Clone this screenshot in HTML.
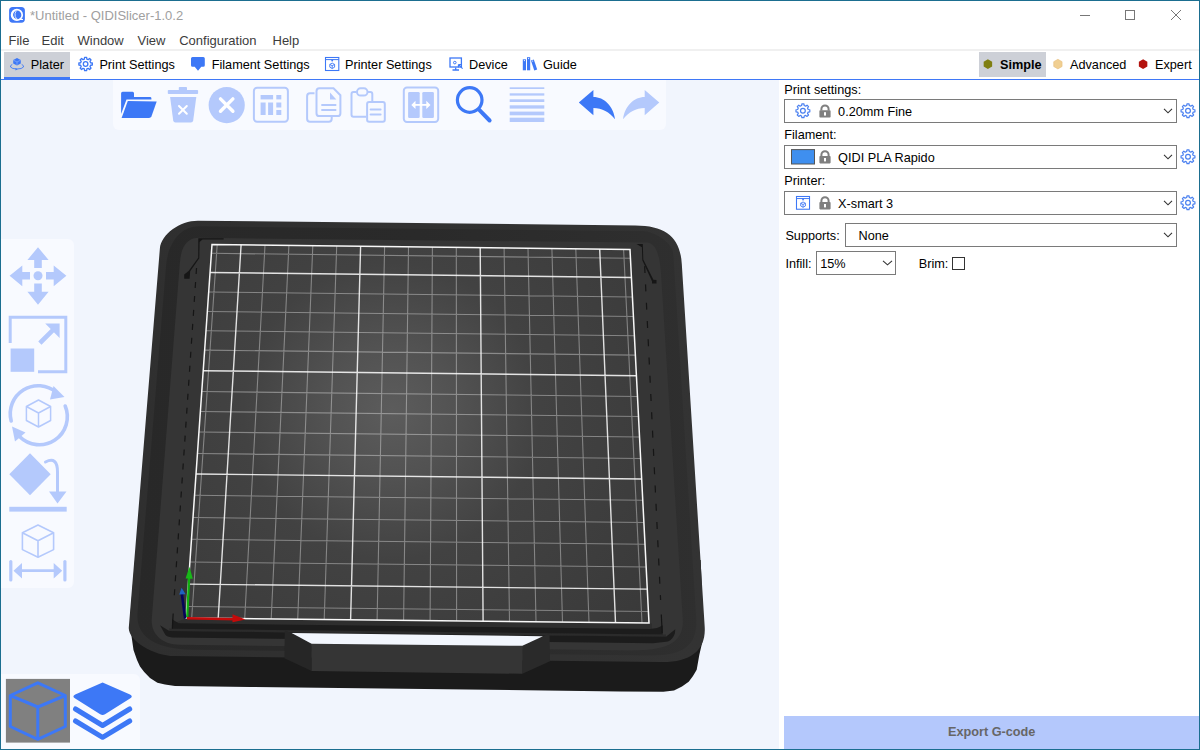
<!DOCTYPE html>
<html><head><meta charset="utf-8">
<style>
*{margin:0;padding:0;box-sizing:border-box}
html,body{width:1200px;height:750px;overflow:hidden;background:#fff;font-family:"Liberation Sans",sans-serif}
.a{position:absolute}
.t{position:absolute;white-space:nowrap;font-size:12.7px;color:#000;line-height:16px;padding-top:1px}
.menu{color:#3c3c3c;font-size:13px}
.box{position:absolute;border:1px solid #7a7a7a;background:#fff}
</style></head><body>
<!-- canvas -->
<div class="a" style="left:1px;top:80px;width:778px;height:669px;background:#f1f5fd"></div>
<div class="a" style="left:113px;top:80px;width:553px;height:49.5px;background:#f8faff;border-radius:0 0 6px 6px"></div>
<div class="a" style="left:1px;top:239px;width:73px;height:349px;background:#f8faff;border-radius:0 6px 6px 0"></div>
<div class="a" style="left:1px;top:674px;width:139px;height:75px;background:#f8faff;border-radius:0 6px 0 0"></div>

<svg class="a" style="left:0;top:0" width="1200" height="750" viewBox="0 0 1200 750">
<path d="M135,560 L130.4,615 L130.5,625 L131.5,636 L133.5,650 L137,660 L140,666.5 L144.2,672 L150,678 L157.4,682.8 L165,684.5 L175,686 L250,687 L620,691.4 L663.3,691.8 L674,690.4 L682,686.5 L688.7,681.7 L693,676 L696.7,669.7 L699.3,655 L702.7,640.3 L703.3,629.7 L700.7,560 Z" fill="#1b1b1b"/>
<defs><linearGradient id="g1" gradientUnits="userSpaceOnUse" x1="130" y1="0" x2="705" y2="0"><stop offset="0" stop-color="#2f2f2f"/><stop offset="1" stop-color="#333333"/></linearGradient><linearGradient id="g2" gradientUnits="userSpaceOnUse" x1="130" y1="0" x2="705" y2="0"><stop offset="0" stop-color="#282828"/><stop offset="0.5" stop-color="#2a2a2a"/><stop offset="1" stop-color="#2f2f2f"/></linearGradient></defs>
<path d="M198.2,220.7 L635.4,225.5 C666.2,225.8 680.2,237.3 681.8,263.9 L704.7,626.7 C706.2,650.1 690.9,662.5 661.0,662.1 L174.6,656.1 C153.0,655.8 127.8,640.1 128.8,627.5 L159.9,248.3 C161.1,234.3 180.2,220.5 198.2,220.7 Z" fill="url(#g1)"/>
<path d="M199.3,226.3 L641.9,231.1 C655.4,231.2 672.6,243.5 673.3,253.4 L696.2,618.0 C697.9,644.6 684.2,655.8 650.6,655.4 L192.6,649.7 C154.9,649.2 135.6,636.4 137.5,613.0 L166.0,266.0 C168.0,242.0 181.3,226.1 199.3,226.3 Z" fill="url(#g2)"/>
<path d="M199.8,237.8 L647.1,242.6 C654.9,242.7 659.8,253.2 661.0,272.7 L682.8,619.0 C684.2,641.4 668.6,650.8 630.8,650.4 L179.7,644.7 C161.7,644.5 150.5,633.9 151.8,618.3 L179.8,263.6 C181.2,245.4 187.2,237.6 199.8,237.8 Z" fill="#353535"/>
<path d="M186,618 L652,623.6 L652,630 L173,624 Z" fill="#2e2e2e"/>
<path d="M169.3,628.6 L666,634.4 L666,636.9 L169.3,631.1 Z" fill="#2b2b2b"/>
<path d="M172,619.3 L178.7,623.3 L650,628.9 Q657.5,628.8 662.7,625.3 L662.7,634.6 L172,628.8 Z" fill="#1c1c1c"/>
<path d="M160,625.3 L169.3,631 L666,636.8 L675.3,629.3 L674.9,633.3 Q673,639.5 668,641.5 L653.3,643.3 L172,637.4 Q167,636.8 165.3,634.7 Z" fill="#1c1c1c"/>
<defs><radialGradient id="pg" gradientUnits="userSpaceOnUse" cx="392" cy="411" r="330"><stop offset="0" stop-color="#5c5c5c"/><stop offset="0.2" stop-color="#525252"/><stop offset="0.45" stop-color="#424242"/><stop offset="1" stop-color="#393939"/></radialGradient></defs>
<path d="M212.0,244.5 L630.0,249.5 L649.0,623.0 L186.0,618.0 Z" fill="url(#pg)"/>
<path d="M211.4,253.3 L630.4,258.3 M208.7,292.0 L632.4,297.0 M207.3,311.5 L633.4,316.5 M206.0,330.7 L634.4,335.7 M204.6,350.1 L635.4,355.1 M201.8,391.5 L637.5,396.5 M200.4,411.5 L638.5,416.5 M198.9,432.0 L639.5,437.0 M197.5,453.5 L640.6,458.5 M194.5,495.3 L642.8,500.3 M193.0,517.5 L643.9,522.5 M191.5,539.3 L645.0,544.3 M189.9,562.0 L646.2,567.0 M186.8,606.5 L648.4,611.5 M217.2,244.6 L191.7,618.1 M265.0,245.1 L244.7,618.6 M288.9,245.4 L271.2,618.9 M312.8,245.7 L297.7,619.2 M336.7,246.0 L324.2,619.5 M384.6,246.6 L377.1,620.1 M408.5,246.8 L403.6,620.4 M432.4,247.1 L430.1,620.6 M456.3,247.4 L456.6,620.9 M504.1,248.0 L509.5,621.5 M528.0,248.3 L536.0,621.8 M551.9,248.6 L562.5,622.1 M575.8,248.9 L589.0,622.4 M623.6,249.4 L642.0,622.9" stroke="#ffffff" stroke-opacity="0.36" stroke-width="1.1" fill="none"/>
<path d="M210.1,272.5 L631.4,277.5 M203.2,370.7 L636.4,375.7 M196.0,474.0 L641.7,479.0 M188.4,584.1 L647.3,589.1 M241.1,244.8 L218.2,618.3 M360.6,246.3 L350.6,619.8 M480.2,247.7 L483.1,621.2 M599.7,249.1 L615.5,622.6" stroke="#ffffff" stroke-opacity="0.85" stroke-width="1.4" fill="none"/>
<path d="M212.0,244.5 L630.0,249.5 L649.0,623.0 L186.0,618.0 Z" fill="none" stroke="#f8f8f8" stroke-width="1.5"/>

<path d="M284.8,630.6 L291.6,633 L311.6,643.8 L311.6,671 L284.4,658.2 Z" fill="#262626"/>
<path d="M543,636.3 L549.5,633.7 L550,661.2 L522.4,673.8 L522.4,645.8 Z" fill="#2a2a2a"/>
<path d="M311.6,643.8 L522.4,645.8 L522.4,673.8 L311.6,671 Z" fill="#353535"/>
<path d="M291.6,633 L543,636.3 L522.4,645.8 L311.6,643.8 Z" fill="#f2f6fd"/>
<path d="M198.5,238.2 L223.6,238.2 L223.6,239.5 L202.5,239.5 L199.6,242 L199.3,258.3 L190.2,271.2 L189.6,278.8 L184.2,278.8 L184.2,274.6 L188.6,271 L198.2,257.8 L198.3,238.2 Z" fill="#161616"/>
<path d="M636.5,244 L642.8,244 L643.3,259.5 L653.4,279.8 L656.5,280 L656.5,283.6 L652,283.6 L652,281.2 L642.3,260.2 L641.9,247.2 Z" fill="#161616"/>
<path d="M196.8,264 L174,600" stroke="#151515" stroke-width="1.2" stroke-dasharray="6,8" stroke-dashoffset="10" fill="none"/><path d="M173.2,613.5 L172.3,628.6" stroke="#151515" stroke-width="1.2" fill="none"/>
<path d="M644.6,265 L660.6,600" stroke="#151515" stroke-width="1.2" stroke-dasharray="7,11.3" stroke-dashoffset="17.2" fill="none"/><path d="M661.3,614.5 L662.2,633" stroke="#151515" stroke-width="1.2" fill="none"/>
<path d="M187,618.3 L236,619.3" stroke="#c40a0a" stroke-width="2.6"/><path d="M232.5,614.3 L245.5,619.4 L232.5,622.3 Z" fill="#c40a0a"/>
<path d="M187.2,617 L189.2,576" stroke="#10b010" stroke-width="2.3"/><path d="M185.6,578.5 L189.4,566.8 L192.8,578.8 Z" fill="#18b818"/>
<path d="M185.2,618.5 L181.8,593.5" stroke="#05055a" stroke-width="2.6"/><path d="M179.2,594.4 L181.6,587.8 L185.6,594.2 Z" fill="#1f62c0"/>
</svg>

<svg class="a" style="left:0;top:0" width="780" height="750" viewBox="0 0 780 750">
<g id="toolbar">
 <!-- open folder -->
 <path d="M121.1,93.2 Q121.1,91.7 122.6,91.7 L132.6,91.7 Q134,91.7 134,93.2 L134,96.9 L150,96.9 Q151.4,96.9 151.4,98.3 L151.4,99.6 L126.5,99.6 L121.1,114 Z" fill="#3d78f6"/>
 <path d="M127.8,101 L156.7,101.4 L151.5,116.2 Q150.8,118 149,118 L121.6,118 Z" fill="#3d78f6"/>
 <!-- trash -->
 <rect x="178.8" y="87" width="8.2" height="3.6" rx="0.8" fill="#b4c9fc"/>
 <rect x="167.8" y="90" width="30.3" height="4" rx="0.8" fill="#b4c9fc"/>
 <path d="M170.1,96.9 L196.3,96.9 L193.2,120.6 Q192.9,122.6 190.9,122.6 L175.5,122.6 Q173.5,122.6 173.2,120.6 Z" fill="#b4c9fc"/>
 <path d="M179,106 L186.8,113.8 M186.8,106 L179,113.8" stroke="#fff" stroke-width="2" stroke-linecap="round"/>
 <!-- circle x -->
 <circle cx="226.7" cy="105.1" r="18.1" fill="#b4c9fc"/>
 <path d="M220.5,98.9 L232.9,111.3 M232.9,98.9 L220.5,111.3" stroke="#fff" stroke-width="3.4" stroke-linecap="round"/>
 <!-- arrange -->
 <rect x="253.9" y="87.7" width="34" height="34" rx="3.2" fill="none" stroke="#b4c9fc" stroke-width="2"/>
 <rect x="260.6" y="95" width="12.5" height="4.4" fill="#b4c9fc"/>
 <rect x="276.3" y="95" width="5" height="4.4" fill="#b4c9fc"/>
 <rect x="276.3" y="102.5" width="5" height="5" fill="#b4c9fc"/>
 <rect x="276.3" y="110" width="5" height="5" fill="#b4c9fc"/>
 <rect x="260.6" y="102.5" width="5" height="12.5" fill="#b4c9fc"/>
 <rect x="268.1" y="102.5" width="5" height="12.5" fill="#b4c9fc"/>
 <!-- copy -->
 <path d="M314.5,93.3 L310,93.3 Q307.1,93.3 307.1,96.2 L307.1,118.8 Q307.1,121.7 310,121.7 L328.8,121.7 Q331.7,121.7 331.7,118.8 L331.7,116.2" fill="none" stroke="#b4c9fc" stroke-width="2"/>
 <path d="M319.4,88.3 L333.5,88.3 L340.4,95.2 L340.4,113.2 Q340.4,116.1 337.5,116.1 L319.4,116.1 Q316.5,116.1 316.5,113.2 L316.5,91.2 Q316.5,88.3 319.4,88.3 Z" fill="none" stroke="#b4c9fc" stroke-width="2"/>
 <path d="M330,92.5 L336.3,99.4 L330,99.4 Z" fill="#b4c9fc"/>
 <path d="M321.3,105 L336.3,105 M321.3,110 L336.3,110" stroke="#b4c9fc" stroke-width="2"/>
 <!-- paste -->
 <path d="M366.2,116.7 L353.5,116.7 Q351.5,116.7 351.5,114.7 L351.5,94.1 Q351.5,92.1 353.5,92.1 L356.5,92.1 M368,92.1 L370.3,92.1 Q372.3,92.1 372.3,94.1 L372.3,101.2" fill="none" stroke="#b4c9fc" stroke-width="2"/>
 <rect x="357" y="88.3" width="10.5" height="7.2" rx="3.6" fill="none" stroke="#b4c9fc" stroke-width="2"/>
 <rect x="367.1" y="102.1" width="17.7" height="19.6" rx="2" fill="none" stroke="#b4c9fc" stroke-width="2"/>
 <path d="M370.6,109.4 L380.6,109.4 M370.6,114.4 L380.6,114.4" stroke="#b4c9fc" stroke-width="2" stroke-linecap="round"/>
 <!-- split -->
 <rect x="403.8" y="87.5" width="34.4" height="34.4" rx="3.2" fill="none" stroke="#b4c9fc" stroke-width="2"/>
 <rect x="408.1" y="92" width="11.6" height="26" rx="1.3" fill="#b4c9fc"/>
 <rect x="422.3" y="92" width="11.6" height="26" rx="1.3" fill="#b4c9fc"/>
 <path d="M413.5,104.9 L428.3,104.9" stroke="#fff" stroke-width="1.8"/>
 <path d="M411.3,104.9 L415.5,100.8 L415.5,109 Z M430.5,104.9 L426.3,100.8 L426.3,109 Z" fill="#fff"/>
 <!-- search -->
 <circle cx="469.7" cy="100" r="12.3" fill="none" stroke="#3d78f6" stroke-width="3.2"/>
 <path d="M479.5,110.2 L489.6,120.5" stroke="#3d78f6" stroke-width="4" stroke-linecap="round"/>
 <!-- layers lines -->
 <rect x="509.7" y="87.3" width="34.6" height="1.7" fill="#b4c9fc"/>
 <rect x="509.7" y="93.3" width="34.6" height="2.3" fill="#b4c9fc"/>
 <rect x="509.7" y="99.3" width="34.6" height="2.7" fill="#b4c9fc"/>
 <rect x="509.7" y="105.3" width="34.6" height="3.3" fill="#b4c9fc"/>
 <rect x="509.7" y="111.6" width="34.6" height="3.7" fill="#b4c9fc"/>
 <rect x="509.7" y="117.7" width="34.6" height="4.3" fill="#b4c9fc"/>
 <!-- undo -->
 <path d="M578.8,102.5 L593.4,90.1 L593.4,97 C604,97 613.5,106 615,119.3 C609.5,112 602,108 593.4,108 L593.4,115.3 Z" fill="#3d78f6"/>
 <!-- redo -->
 <path d="M659.3,102.5 L644.7,90.1 L644.7,97 C634.1,97 624.6,106 623.1,119.3 C628.6,112 636.1,108 644.7,108 L644.7,115.3 Z" fill="#b4c9fc"/>
</g>
<g id="gizmos" fill="#b4c9fc" stroke="none">
 <!-- move -->
 <circle cx="38" cy="275.8" r="4.5"/>
 <path d="M38,247.2 L48.6,260 L41.8,260 L41.8,268 L34.2,268 L34.2,260 L27.4,260 Z"/>
 <path d="M38,304.7 L48.6,291.8 L41.8,291.8 L41.8,283.6 L34.2,283.6 L34.2,291.8 L27.4,291.8 Z"/>
 <path d="M9.6,275.8 L22.3,265.4 L22.3,272 L30,272 L30,279.6 L22.3,279.6 L22.3,286.2 Z"/>
 <path d="M66.4,275.8 L53.7,265.4 L53.7,272 L46,272 L46,279.6 L53.7,279.6 L53.7,286.2 Z"/>
 <!-- scale -->
 <path d="M10.2,343 L10.2,317.2 L65.8,317.2 L65.8,371.8 L38,371.8" fill="none" stroke="#b4c9fc" stroke-width="3"/>
 <rect x="10.6" y="348.5" width="23.6" height="23.3"/>
 <path d="M41.5,341.5 L53,330" stroke="#b4c9fc" stroke-width="4.6" stroke-linecap="square"/>
 <path d="M59.6,323.6 L59.6,338 L45.2,323.6 Z"/>
 <!-- rotate -->
 <g fill="none" stroke="#b4c9fc">
  <path d="M11.2,421 A28,28 0 0 1 56.5,392.5" stroke-width="3.6" stroke-linecap="round"/>
  <path d="M65.2,406 A28,28 0 0 1 19.5,436.5" stroke-width="3.6" stroke-linecap="round"/>
  <path d="M38.5,400 L50.6,406.5 L50.6,420.5 L38.5,427 L26.4,420.5 L26.4,406.5 Z M26.4,406.5 L38.5,413 L50.6,406.5 M38.5,413 L38.5,427" stroke-width="1.5" stroke-linejoin="round"/>
 </g>
 <path d="M53.5,386 L64.5,397 L50,399.5 Z"/>
 <path d="M12,426.5 L25.5,432.5 L15,441.5 Z"/>
 <!-- place on face -->
 <path d="M30,453.3 L50.7,474.3 L30,495.2 L9.3,474.3 Z"/>
 <path d="M45.5,462 Q57.5,456 57.5,472 L57.5,497" fill="none" stroke="#b4c9fc" stroke-width="3" stroke-linecap="round"/>
 <path d="M49,491.5 L66.5,491.5 L57.5,503.5 Z"/>
 <rect x="9.3" y="506.8" width="57.4" height="4.8"/>
 <!-- measure -->
 <path d="M38,525 L53.6,532.8 L53.6,549.6 L38,557.3 L22.4,549.6 L22.4,532.8 Z M22.4,532.8 L38,540.8 L53.6,532.8 M38,540.8 L38,557.3" fill="none" stroke="#b4c9fc" stroke-width="1.6" stroke-linejoin="round"/>
 <rect x="9.2" y="560" width="3.2" height="21.5" rx="1.6"/>
 <rect x="63.3" y="560" width="3.2" height="21.5" rx="1.6"/>
 <path d="M20,570.7 L56,570.7" stroke="#b4c9fc" stroke-width="2.8"/>
 <path d="M13.5,570.7 L22,563 L22,578.4 Z M62.2,570.7 L53.7,563 L53.7,578.4 Z"/>
</g>
<g id="views">
 <rect x="5.9" y="678.9" width="64.1" height="63.7" fill="#808080"/>
 <path d="M37.8,682.8 L65.3,695.5 L65.3,726.5 L37.8,739.3 L10.3,726.5 L10.3,695.5 Z M10.3,695.5 L37.8,707 L65.3,695.5 M37.8,707 L37.8,739.3" fill="none" stroke="#3d78f6" stroke-width="3" stroke-linejoin="round"/>
 <path d="M102.6,682.6 L130,694.6 Q133.6,696.5 130,698.6 L105,714.2 Q102.6,715.7 100.2,714.2 L75.2,698.6 Q71.6,696.5 75.2,694.6 Z" fill="#3d78f6"/>
 <path d="M75.5,709 L102.6,725.5 L129.7,709" fill="none" stroke="#3d78f6" stroke-width="5" stroke-linecap="round" stroke-linejoin="round"/>
 <path d="M75.5,721 L102.6,737.3 L129.7,721" fill="none" stroke="#3d78f6" stroke-width="5" stroke-linecap="round" stroke-linejoin="round"/>
</g>
</svg>


<!-- title bar -->
<svg class="a" style="left:0;top:0" width="30" height="30" viewBox="0 0 30 30">
 <rect x="9.1" y="7" width="15.8" height="15.7" rx="3.6" fill="#3f78f7"/>
 <circle cx="16.9" cy="14.9" r="5.3" fill="none" stroke="#fff" stroke-width="1.7"/>
 <path d="M15.3,10.3 Q12,12.5 12.6,15.8 Q13.2,18.6 16.4,19.6" fill="none" stroke="#fff" stroke-width="1.1"/>
 <path d="M16.3,10.6 Q14.4,13.5 15.2,16.4 Q15.8,18.4 17.6,19.3" fill="none" stroke="#fff" stroke-width="0.8"/>
 <rect x="19.5" y="18.9" width="3.5" height="1.1" fill="#fff"/>
</svg>
<div class="t" style="left:30px;top:7.4px;color:#a0a0a0;font-size:13px">*Untitled - QIDISlicer-1.0.2</div>
<div class="a" style="left:1080px;top:15px;width:10px;height:1px;background:#777"></div>
<div class="a" style="left:1125px;top:10px;width:10px;height:10px;border:1px solid #777"></div>
<svg class="a" style="left:1170px;top:9px" width="12" height="12"><path d="M1 1L11 11M11 1L1 11" stroke="#777" stroke-width="1"/></svg>

<!-- menu -->
<div class="t menu" style="left:8.5px;top:32.3px">File</div>
<div class="t menu" style="left:41.5px;top:32.3px">Edit</div>
<div class="t menu" style="left:77.5px;top:32.3px">Window</div>
<div class="t menu" style="left:137.5px;top:32.3px">View</div>
<div class="t menu" style="left:179.2px;top:32.3px">Configuration</div>
<div class="t menu" style="left:272.5px;top:32.3px">Help</div>
<div class="a" style="left:1px;top:49px;width:1198px;height:2px;background:#f0f0f0"></div>

<!-- tabs -->
<div class="a" style="left:4px;top:52px;width:66px;height:25px;background:#cdd0d7"></div>
<div class="a" style="left:4px;top:77px;width:66px;height:2px;background:#3f78f7"></div>
<div class="a" style="left:1px;top:79px;width:1198px;height:1px;background:#3f78f7"></div>
<div class="t" style="left:30.8px;top:56.4px">Plater</div>
<div class="t" style="left:99.4px;top:56.4px">Print Settings</div>
<div class="t" style="left:211.7px;top:56.4px">Filament Settings</div>
<div class="t" style="left:345px;top:56.4px">Printer Settings</div>
<div class="t" style="left:469px;top:56.4px">Device</div>
<div class="t" style="left:543px;top:56.4px">Guide</div>

<div class="a" style="left:979px;top:52px;width:67px;height:25px;background:#cdd0d7"></div>
<div class="t" style="left:1000px;top:56.4px;font-weight:bold">Simple</div>
<div class="t" style="left:1070px;top:56.4px">Advanced</div>
<div class="t" style="left:1155px;top:56.4px">Expert</div>

<!-- right panel -->
<div class="t" style="left:784.3px;top:80.6px">Print settings:</div>
<div class="box" style="left:784px;top:99px;width:393px;height:24px"></div>
<div class="t" style="left:838.1px;top:103.1px">0.20mm Fine</div>
<div class="t" style="left:784.3px;top:126.4px">Filament:</div>
<div class="box" style="left:784px;top:145px;width:393px;height:24px"></div>
<div class="t" style="left:838.1px;top:149.3px">QIDI PLA Rapido</div>
<div class="t" style="left:784.3px;top:172.3px">Printer:</div>
<div class="box" style="left:784px;top:191px;width:393px;height:24px"></div>
<div class="t" style="left:838.1px;top:195.2px">X-smart 3</div>
<div class="t" style="left:785.4px;top:226.8px">Supports:</div>
<div class="box" style="left:845px;top:223px;width:332px;height:24px"></div>
<div class="t" style="left:858.5px;top:226.8px">None</div>
<div class="t" style="left:785.4px;top:254.7px">Infill:</div>
<div class="box" style="left:816px;top:251px;width:80px;height:24px"></div>
<div class="t" style="left:820.2px;top:254.7px">15%</div>
<div class="t" style="left:918.7px;top:254.7px">Brim:</div>
<div class="a" style="left:952px;top:257px;width:13px;height:13px;border:1px solid #333;background:#fff"></div>

<div class="a" style="left:784px;top:716px;width:415px;height:33px;background:#b4c8fc"></div>
<div class="t" style="left:948px;top:722.6px;font-weight:bold;color:#666">Export G-code</div>

<svg class="a" style="left:0;top:0" width="1200" height="300" viewBox="0 0 1200 300">
<g fill="#3d78f6">
<path d="M17,58 L20.8,60 L20.8,63.6 L17,65.4 L13.2,63.6 L13.2,60 Z"/>
<path d="M13.2,60 L17,62 L20.8,60 M17,62 L17,65.4" stroke="#9ab8f8" stroke-width="0.6" fill="none"/>
<path d="M12.3,64.4 Q10,65.5 10.5,67 Q12,69 17,69 Q22,69 23.5,67 Q24,65.5 21.7,64.4" fill="none" stroke="#3d78f6" stroke-width="0.9"/>
<path d="M15.5,68 L17.5,69.3 L15.5,70.5 Z"/>
</g>
<path d="M84.37,59.05 L84.59,57.28 L86.61,57.28 L86.83,59.05 L88.23,59.63 L89.64,58.53 L91.07,59.96 L89.97,61.37 L90.55,62.77 L92.32,62.99 L92.32,65.01 L90.55,65.23 L89.97,66.63 L91.07,68.04 L89.64,69.47 L88.23,68.37 L86.83,68.95 L86.61,70.72 L84.59,70.72 L84.37,68.95 L82.97,68.37 L81.56,69.47 L80.13,68.04 L81.23,66.63 L80.65,65.23 L78.88,65.01 L78.88,62.99 L80.65,62.77 L81.23,61.37 L80.13,59.96 L81.56,58.53 L82.97,59.63 Z" fill="none" stroke="#3d78f6" stroke-width="1.3" stroke-linejoin="round"/>
<circle cx="85.6" cy="64" r="2.3" fill="none" stroke="#3d78f6" stroke-width="1.3"/>
<path d="M192.5,57 L203.3,57 Q204.8,57 204.8,58.5 L204.8,65.3 Q204.8,66.8 203.3,66.8 L201.3,66.8 L198,70.7 L194.7,66.8 L192.5,66.8 Q191,66.8 191,65.3 L191,58.5 Q191,57 192.5,57 Z" fill="#3d78f6"/>
<g transform="translate(325.00,57.00) scale(1.000)"><rect x="0.5" y="0.5" width="13.3" height="13" fill="none" stroke="#3d78f6" stroke-width="1.1"/><path d="M0.5,2.6 L13.8,2.6" stroke="#3d78f6" stroke-width="1"/><path d="M6,2.6 L8.4,2.6 L7.7,4.6 L6.7,4.6 Z" fill="#3d78f6"/><path d="M7.2,6.1 L9.6,7.4 L9.6,10.2 L7.2,11.5 L4.8,10.2 L4.8,7.4 Z M4.8,7.4 L7.2,8.7 L9.6,7.4 M7.2,8.7 L7.2,11.5" fill="none" stroke="#3d78f6" stroke-width="0.9"/></g>
<rect x="450" y="58" width="11.4" height="9" fill="none" stroke="#3d78f6" stroke-width="1.3"/>
<path d="M455.7,67.5 L455.7,69.6 M452.5,70 L459,70" stroke="#3d78f6" stroke-width="1.3"/>
<circle cx="454.8" cy="62.6" r="1.3" fill="none" stroke="#3d78f6" stroke-width="1"/>
<path d="M458.4,64.6 L462.6,68.6 M458.4,64.6 L461.2,64.6 M458.4,64.6 L458.4,67.4" stroke="#3d78f6" stroke-width="1.1"/>
<rect x="522.8" y="59.3" width="3.2" height="11" fill="#3d78f6"/>
<rect x="527" y="57.2" width="3.2" height="13.1" fill="#3d78f6"/>
<path d="M530.9,60.4 L533.8,59.4 L537.2,69.6 L534.3,70.5 Z" fill="#3d78f6"/>
<circle cx="524.4" cy="60.6" r="0.6" fill="#fff"/><circle cx="528.6" cy="58.6" r="0.6" fill="#fff"/><circle cx="532.6" cy="61" r="0.6" fill="#fff"/>
<path d="M987.90,69.00 L983.66,66.55 L983.66,61.65 L987.90,59.20 L992.14,61.65 L992.14,66.55 Z" fill="#7f7f12"/>
<path d="M1057.90,68.90 L1053.74,66.50 L1053.74,61.70 L1057.90,59.30 L1062.06,61.70 L1062.06,66.50 Z" fill="#f0cf92" stroke="#e6bd7c" stroke-width="0.6"/>
<path d="M1143.10,69.00 L1138.86,66.55 L1138.86,61.65 L1143.10,59.20 L1147.34,61.65 L1147.34,66.55 Z" fill="#b3120e"/>
<path d="M1186.70,105.56 L1186.96,103.88 L1189.04,103.88 L1189.30,105.56 L1190.79,106.17 L1192.16,105.17 L1193.63,106.64 L1192.63,108.01 L1193.24,109.50 L1194.92,109.76 L1194.92,111.84 L1193.24,112.10 L1192.63,113.59 L1193.63,114.96 L1192.16,116.43 L1190.79,115.43 L1189.30,116.04 L1189.04,117.72 L1186.96,117.72 L1186.70,116.04 L1185.21,115.43 L1183.84,116.43 L1182.37,114.96 L1183.37,113.59 L1182.76,112.10 L1181.08,111.84 L1181.08,109.76 L1182.76,109.50 L1183.37,108.01 L1182.37,106.64 L1183.84,105.17 L1185.21,106.17 Z" fill="none" stroke="#4a80f0" stroke-width="1.2" stroke-linejoin="round"/>
<circle cx="1188" cy="110.8" r="2.4" fill="none" stroke="#4a80f0" stroke-width="1.2"/>
<path d="M1186.70,151.56 L1186.96,149.88 L1189.04,149.88 L1189.30,151.56 L1190.79,152.17 L1192.16,151.17 L1193.63,152.64 L1192.63,154.01 L1193.24,155.50 L1194.92,155.76 L1194.92,157.84 L1193.24,158.10 L1192.63,159.59 L1193.63,160.96 L1192.16,162.43 L1190.79,161.43 L1189.30,162.04 L1189.04,163.72 L1186.96,163.72 L1186.70,162.04 L1185.21,161.43 L1183.84,162.43 L1182.37,160.96 L1183.37,159.59 L1182.76,158.10 L1181.08,157.84 L1181.08,155.76 L1182.76,155.50 L1183.37,154.01 L1182.37,152.64 L1183.84,151.17 L1185.21,152.17 Z" fill="none" stroke="#4a80f0" stroke-width="1.2" stroke-linejoin="round"/>
<circle cx="1188" cy="156.8" r="2.4" fill="none" stroke="#4a80f0" stroke-width="1.2"/>
<path d="M1186.70,197.56 L1186.96,195.88 L1189.04,195.88 L1189.30,197.56 L1190.79,198.17 L1192.16,197.17 L1193.63,198.64 L1192.63,200.01 L1193.24,201.50 L1194.92,201.76 L1194.92,203.84 L1193.24,204.10 L1192.63,205.59 L1193.63,206.96 L1192.16,208.43 L1190.79,207.43 L1189.30,208.04 L1189.04,209.72 L1186.96,209.72 L1186.70,208.04 L1185.21,207.43 L1183.84,208.43 L1182.37,206.96 L1183.37,205.59 L1182.76,204.10 L1181.08,203.84 L1181.08,201.76 L1182.76,201.50 L1183.37,200.01 L1182.37,198.64 L1183.84,197.17 L1185.21,198.17 Z" fill="none" stroke="#4a80f0" stroke-width="1.2" stroke-linejoin="round"/>
<circle cx="1188" cy="202.8" r="2.4" fill="none" stroke="#4a80f0" stroke-width="1.2"/>
<path d="M1164.0,108.8 L1168.0,112.8 L1172.0,108.8" fill="none" stroke="#333" stroke-width="1.1"/>
<path d="M1164.0,154.8 L1168.0,158.8 L1172.0,154.8" fill="none" stroke="#333" stroke-width="1.1"/>
<path d="M1164.0,200.8 L1168.0,204.8 L1172.0,200.8" fill="none" stroke="#333" stroke-width="1.1"/>
<path d="M1164.0,232.8 L1168.0,236.8 L1172.0,232.8" fill="none" stroke="#333" stroke-width="1.1"/>
<path d="M883.0,260.8 L887.5,264.8 L892.0,260.8" fill="none" stroke="#333" stroke-width="1.1"/>
<path d="M801.60,105.56 L801.86,103.88 L803.94,103.88 L804.20,105.56 L805.69,106.17 L807.06,105.17 L808.53,106.64 L807.53,108.01 L808.14,109.50 L809.82,109.76 L809.82,111.84 L808.14,112.10 L807.53,113.59 L808.53,114.96 L807.06,116.43 L805.69,115.43 L804.20,116.04 L803.94,117.72 L801.86,117.72 L801.60,116.04 L800.11,115.43 L798.74,116.43 L797.27,114.96 L798.27,113.59 L797.66,112.10 L795.98,111.84 L795.98,109.76 L797.66,109.50 L798.27,108.01 L797.27,106.64 L798.74,105.17 L800.11,106.17 Z" fill="none" stroke="#4a80f0" stroke-width="1.2" stroke-linejoin="round"/>
<circle cx="802.9" cy="110.8" r="2.4" fill="none" stroke="#4a80f0" stroke-width="1.2"/>
<rect x="791.5" y="149.6" width="23" height="14.4" fill="#3f8fef" stroke="#555" stroke-width="1"/>
<g transform="translate(796.00,196.00) scale(0.980)"><rect x="0.5" y="0.5" width="13.3" height="13" fill="none" stroke="#3d78f6" stroke-width="1.1"/><path d="M0.5,2.6 L13.8,2.6" stroke="#3d78f6" stroke-width="1"/><path d="M6,2.6 L8.4,2.6 L7.7,4.6 L6.7,4.6 Z" fill="#3d78f6"/><path d="M7.2,6.1 L9.6,7.4 L9.6,10.2 L7.2,11.5 L4.8,10.2 L4.8,7.4 Z M4.8,7.4 L7.2,8.7 L9.6,7.4 M7.2,8.7 L7.2,11.5" fill="none" stroke="#3d78f6" stroke-width="0.9"/></g>
<path d="M821.4,110.6 L821.4,109.0 A3.6,3.6 0 0 1 828.6,109.0 L828.6,110.6" fill="none" stroke="#7f7f7f" stroke-width="2"/><rect x="819.4" y="110.2" width="11.2" height="7.4" rx="0.8" fill="#7f7f7f"/><rect x="824.0" y="112.2" width="2" height="3.4" fill="#fff"/>
<path d="M821.4,156.4 L821.4,154.8 A3.6,3.6 0 0 1 828.6,154.8 L828.6,156.4" fill="none" stroke="#7f7f7f" stroke-width="2"/><rect x="819.4" y="156.0" width="11.2" height="7.4" rx="0.8" fill="#7f7f7f"/><rect x="824.0" y="158.0" width="2" height="3.4" fill="#fff"/>
<path d="M821.4,202.4 L821.4,200.8 A3.6,3.6 0 0 1 828.6,200.8 L828.6,202.4" fill="none" stroke="#7f7f7f" stroke-width="2"/><rect x="819.4" y="202.0" width="11.2" height="7.4" rx="0.8" fill="#7f7f7f"/><rect x="824.0" y="204.0" width="2" height="3.4" fill="#fff"/>
</svg>

<!-- window border -->
<div class="a" style="left:0;top:0;width:1200px;height:750px;border:1px solid #1b6e90"></div>
</body></html>
